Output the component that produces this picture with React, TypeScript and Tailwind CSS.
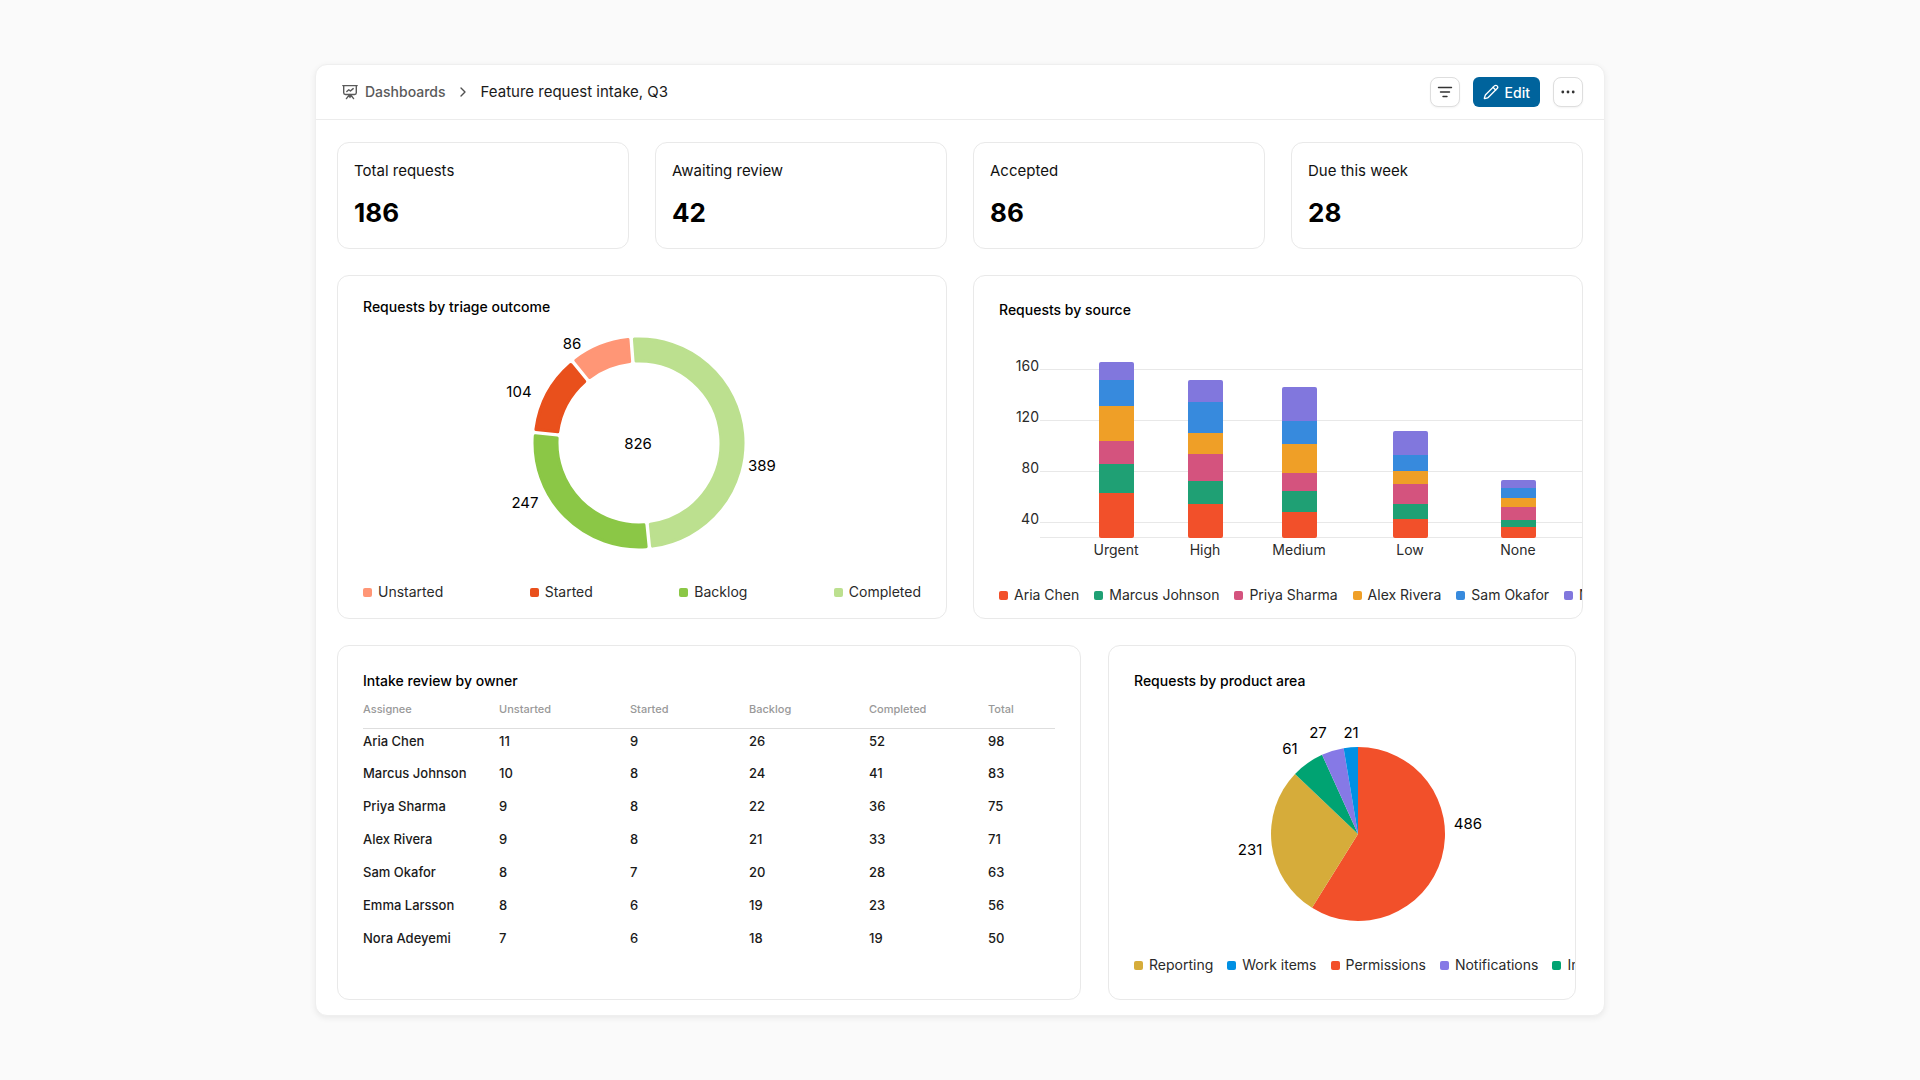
import cn from 'clsx'
import { ChevronRight, Pencil } from 'lucide-react'
import type { ReactNode } from 'react'

type Slice = { color: string; from: number; to: number }
type ChartLabel = { value: number; x: number; y: number }
type LegendItem = { name: string; color: string }

const stats = [
  { label: 'Total requests', value: 186 },
  { label: 'Awaiting review', value: 42 },
  { label: 'Accepted', value: 86 },
  { label: 'Due this week', value: 28 }
]

const triageLegend: LegendItem[] = [
  { name: 'Unstarted', color: 'bg-[#ff9676]' },
  { name: 'Started', color: 'bg-[#e9501c]' },
  { name: 'Backlog', color: 'bg-[#8bc746]' },
  { name: 'Completed', color: 'bg-[#bce08f]' }
]

// Angles are degrees, clockwise from the top
const triageSlices: Slice[] = [
  { color: '#bce08f', from: -4.3, to: 174.3 },
  { color: '#8bc746', from: 174.3, to: 275.7 },
  { color: '#e9501c', from: 275.7, to: 320.8 },
  { color: '#ff9676', from: 320.8, to: 355.7 }
]

const triageLabels: ChartLabel[] = [
  { value: 86, x: 210, y: 18 },
  { value: 104, x: 157, y: 66 },
  { value: 247, x: 163, y: 177 },
  { value: 389, x: 400, y: 140 },
  { value: 826, x: 276, y: 118 }
]

const sourceLegend: LegendItem[] = [
  { name: 'Aria Chen', color: 'bg-[#f2502a]' },
  { name: 'Marcus Johnson', color: 'bg-[#1fa074]' },
  { name: 'Priya Sharma', color: 'bg-[#d4537e]' },
  { name: 'Alex Rivera', color: 'bg-[#ef9f27]' },
  { name: 'Sam Okafor', color: 'bg-[#378add]' },
  { name: 'Nora Adeyemi', color: 'bg-[#8177dd]' }
]

const stackColors = ['#8177dd', '#378add', '#ef9f27', '#d4537e', '#1fa074', '#f2502a']

// Segment heights run from the top of the stack down
const sourceBars = [
  { name: 'Urgent', x: 142, parts: [18, 26, 35, 23, 29, 45] },
  { name: 'High', x: 231, parts: [22, 31, 21, 27, 23, 34] },
  { name: 'Medium', x: 325, parts: [34, 23, 29, 18, 21, 26] },
  { name: 'Low', x: 436, parts: [24, 16, 13, 20, 15, 19] },
  { name: 'None', x: 544, parts: [8, 10, 9, 13, 7, 11] }
]

const sourceTicks = [
  { value: 160, y: 20 },
  { value: 120, y: 71 },
  { value: 80, y: 122 },
  { value: 40, y: 173 }
]

const areaLegend: LegendItem[] = [
  { name: 'Reporting', color: 'bg-[#d6ac3a]' },
  { name: 'Work items', color: 'bg-[#0090e3]' },
  { name: 'Permissions', color: 'bg-[#f2502a]' },
  { name: 'Notifications', color: 'bg-[#8679e6]' },
  { name: 'Integrations', color: 'bg-[#00a372]' }
]

const areaSlices: Slice[] = [
  { color: '#f2502a', from: 0, to: 211.9 },
  { color: '#d6ac3a', from: 211.9, to: 313.6 },
  { color: '#00a372', from: 313.6, to: 335.6 },
  { color: '#8679e6', from: 335.6, to: 350.5 },
  { color: '#0090e3', from: 350.5, to: 360 }
]

const areaLabels: ChartLabel[] = [
  { value: 486, x: 335, y: 108 },
  { value: 231, x: 117, y: 134 },
  { value: 61, x: 157, y: 33 },
  { value: 27, x: 185, y: 17 },
  { value: 21, x: 218, y: 17 }
]

const columns = [
  { name: 'Assignee', width: 'w-[136px]' },
  { name: 'Unstarted', width: 'w-[131px]' },
  { name: 'Started', width: 'w-[119px]' },
  { name: 'Backlog', width: 'w-[120px]' },
  { name: 'Completed', width: 'w-[119px]' },
  { name: 'Total', width: 'w-auto' }
]

const owners = [
  { name: 'Aria Chen', counts: [11, 9, 26, 52, 98] },
  { name: 'Marcus Johnson', counts: [10, 8, 24, 41, 83] },
  { name: 'Priya Sharma', counts: [9, 8, 22, 36, 75] },
  { name: 'Alex Rivera', counts: [9, 8, 21, 33, 71] },
  { name: 'Sam Okafor', counts: [8, 7, 20, 28, 63] },
  { name: 'Emma Larsson', counts: [8, 6, 19, 23, 56] },
  { name: 'Nora Adeyemi', counts: [7, 6, 18, 19, 50] }
]

const point = (cx: number, cy: number, r: number, rad: number) =>
  `${(cx + r * Math.sin(rad)).toFixed(2)} ${(cy - r * Math.cos(rad)).toFixed(2)}`

const toRad = (deg: number) => (deg * Math.PI) / 180

/** Ring segment whose ends stay parallel to the gap beside them */
function ringPath(cx: number, cy: number, inner: number, outer: number, slice: Slice, inset: number) {
  const a = toRad(slice.from)
  const b = toRad(slice.to)
  const o = Math.asin(inset / outer)
  const i = Math.asin(inset / inner)
  // The inset can bring a half ring below 180 degrees on the inner side only
  const largeOuter = b - a - 2 * o > Math.PI ? 1 : 0
  const largeInner = b - a - 2 * i > Math.PI ? 1 : 0
  return [
    `M${point(cx, cy, outer, a + o)}`,
    `A${outer} ${outer} 0 ${largeOuter} 1 ${point(cx, cy, outer, b - o)}`,
    `L${point(cx, cy, inner, b - i)}`,
    `A${inner} ${inner} 0 ${largeInner} 0 ${point(cx, cy, inner, a + i)}Z`
  ].join('')
}

function piePath(cx: number, cy: number, r: number, slice: Slice) {
  const a = toRad(slice.from)
  const b = toRad(slice.to)
  const large = b - a > Math.PI ? 1 : 0
  return `M${cx} ${cy}L${point(cx, cy, r, a)}A${r} ${r} 0 ${large} 1 ${point(cx, cy, r, b)}Z`
}

function BoardIcon() {
  return (
    <svg
      className="h-4 w-4"
      viewBox="0 0 16 16"
      fill="none"
      stroke="currentColor"
      strokeWidth="1.4"
      strokeLinecap="round"
      strokeLinejoin="round"
      aria-hidden="true"
    >
      <path d="M.8 1.6h14.4M1.7 1.6v7.2c0 1 .7 1.7 1.7 1.7h9.2c1 0 1.7-.7 1.7-1.7V1.6" />
      <path d="M4.8 7.6l2-1.8 1.6 1.2 2.8-2.4M8 10.5v3M7.4 10.8l-3 3.8M8.6 10.8l3 3.8" />
    </svg>
  )
}

function Labels(props: { items: ChartLabel[] }) {
  return (
    <g className="fill-black text-[15px]" textAnchor="middle" dominantBaseline="central">
      {props.items.map(item => (
        <text key={item.value} x={item.x} y={item.y}>
          {item.value}
        </text>
      ))}
    </g>
  )
}

function Legend(props: { items: LegendItem[]; className?: string }) {
  return (
    <ul className={cn('flex text-[14px] leading-5 whitespace-nowrap text-[#2a2a2a]', props.className)}>
      {props.items.map(item => (
        <li key={item.name} className="flex items-center gap-1.5">
          <span className={cn('h-[9px] w-[9px] shrink-0 rounded-xs', item.color)}></span>
          {item.name}
        </li>
      ))}
    </ul>
  )
}

function Card(props: { title: string; className?: string; children: ReactNode }) {
  return (
    <section
      className={cn(
        'flex min-w-0 flex-col overflow-hidden rounded-xl border border-[#e9e9e9] bg-white',
        props.className
      )}
    >
      <h2 className="px-[25px] text-[14px] leading-5 font-medium text-black">{props.title}</h2>
      {props.children}
    </section>
  )
}

function TriageCard() {
  return (
    <Card title="Requests by triage outcome" className="pt-[21px] pb-4">
      <svg className="mx-6 mt-2" viewBox="0 0 560 235" role="img" aria-label="Triage outcome">
        {triageSlices.map(slice => (
          <path
            key={slice.color}
            d={ringPath(277, 118, 82, 104, slice, 3.2)}
            fill={slice.color}
            stroke={slice.color}
            strokeWidth="3"
            strokeLinejoin="round"
          />
        ))}
        <Labels items={triageLabels} />
      </svg>
      <Legend items={triageLegend} className="mt-[22px] justify-between px-[25px]" />
    </Card>
  )
}

function SourceBar(props: { bar: (typeof sourceBars)[number] }) {
  const { name, x, parts } = props.bar
  const total = parts.reduce((sum, h) => sum + h, 0)
  const clipId = `bar-${name}`
  let y = 188 - total
  return (
    <g>
      <clipPath id={clipId}>
        <rect x={x - 17} y={y} width="35" height={total} rx="2" />
      </clipPath>
      <g clipPath={`url(#${clipId})`}>
        {parts.map((h, i) => {
          const top = y
          y += h
          return <rect key={i} x={x - 17} y={top} width="35" height={h} fill={stackColors[i]} />
        })}
      </g>
      <text x={x} y="205" textAnchor="middle">
        {name}
      </text>
    </g>
  )
}

function SourceCard() {
  return (
    <Card title="Requests by source" className="pt-6">
      <svg
        className="mt-[30px] fill-[#2a2a2a] text-[14px]"
        viewBox="0 0 608 210"
        role="img"
        aria-label="Requests by source"
      >
        {sourceTicks.map(tick => (
          <g key={tick.value}>
            <rect x="66" y={tick.y - 1} width="542" height="1" fill="#e8e8e8" />
            <text x="65" y={tick.y + 1} textAnchor="end">
              {tick.value}
            </text>
          </g>
        ))}
        <rect x="66" y="187" width="542" height="1" fill="#e8e8e8" />
        {sourceBars.map(bar => (
          <SourceBar key={bar.name} bar={bar} />
        ))}
      </svg>
      <Legend items={sourceLegend} className="mt-[25px] gap-[15px] pl-[25px]" />
    </Card>
  )
}

function OwnersCard() {
  return (
    <Card title="Intake review by owner" className="pt-[25px] pb-10">
      <div className="mt-2 px-[25px]">
        <table className="w-full table-fixed text-left font-medium">
          <thead>
            <tr className="border-b border-[#dedede]">
              {columns.map(col => (
                <th
                  key={col.name}
                  scope="col"
                  className={cn('h-[29px] p-0 align-top text-[11px] leading-5 font-medium text-[#999]', col.width)}
                >
                  {col.name}
                </th>
              ))}
            </tr>
          </thead>
          <tbody className="text-[13px] leading-5 text-[#1a1a1a]">
            {owners.map(owner => (
              <tr key={owner.name}>
                <td className="h-[33px] pt-0.5 align-top">{owner.name}</td>
                {owner.counts.map((count, i) => (
                  <td key={i} className="h-[33px] pt-0.5 align-top">
                    {count}
                  </td>
                ))}
              </tr>
            ))}
          </tbody>
        </table>
      </div>
    </Card>
  )
}

function AreaCard() {
  return (
    <Card title="Requests by product area" className="pt-[25px]">
      <svg className="mx-6 mt-6" viewBox="0 0 418 220" role="img" aria-label="Requests by product area">
        {areaSlices.map(slice => (
          <path key={slice.color} d={piePath(225, 119, 87, slice)} fill={slice.color} />
        ))}
        <Labels items={areaLabels} />
      </svg>
      <Legend items={areaLegend} className="mt-5 gap-[14px] pl-[25px]" />
    </Card>
  )
}

export default function App() {
  return (
    <div className="min-h-screen bg-[#fafafa] py-16 font-['Inter',sans-serif] text-[#111] [font-optical-sizing:none]">
      <main className="mx-auto w-full max-w-[1290px] rounded-xl border border-[#efefef] bg-white shadow-[0_2px_6px_rgba(0,0,0,0.07)]">
        <header className="flex h-[55px] items-center justify-between border-b border-[#ececec] px-[21px]">
          <nav aria-label="Breadcrumb" className="flex items-center pl-[5px]">
            <a href="#" className="flex items-center gap-[7px] text-[14px] leading-5 font-medium text-[#5a5a5a]">
              <BoardIcon />
              Dashboards
            </a>
            <ChevronRight className="mr-2.5 ml-[9px] h-4 w-4 text-[#4f4f4f]" strokeWidth={2} />
            <h1 className="text-[15px] leading-5 text-[#1a1a1a]">Feature request intake, Q3</h1>
          </nav>
          <div className="flex items-center gap-[13px]">
            <button
              type="button"
              aria-label="Filter"
              className="flex h-[30px] w-[30px] items-center justify-center rounded-lg border border-[#dedede] bg-white shadow-xs"
            >
              <svg
                className="h-4 w-4 shrink-0"
                viewBox="0 0 16 16"
                stroke="#333"
                strokeWidth="1.4"
                strokeLinecap="round"
                aria-hidden="true"
              >
                <path d="M1.5 3.5h13M3.5 8h9M6 12.5h4" />
              </svg>
            </button>
            <button
              type="button"
              className="flex h-[30px] items-center gap-1.5 rounded-md bg-[#00639c] px-2.5 text-[14px] font-medium text-white"
            >
              <Pencil className="h-4 w-4" strokeWidth={2} />
              Edit
            </button>
            <button
              type="button"
              aria-label="More"
              className="flex h-[30px] w-[30px] items-center justify-center rounded-lg border border-[#dedede] bg-white shadow-xs"
            >
              <svg className="h-4 w-4 shrink-0" viewBox="0 0 16 16" fill="#333" aria-hidden="true">
                <circle cx="2.8" cy="8" r="1.4" />
                <circle cx="8" cy="8" r="1.4" />
                <circle cx="13.2" cy="8" r="1.4" />
              </svg>
            </button>
          </div>
        </header>

        <div className="flex flex-col gap-[26px] px-[21px] pt-[22px] pb-[15px]">
          <div className="grid grid-cols-4 gap-[26px]">
            {stats.map(stat => (
              <section key={stat.label} className="rounded-xl border border-[#e9e9e9] bg-white px-4 pt-[18px] pb-[19px]">
                <h2 className="text-[15px] leading-5">{stat.label}</h2>
                <p className="mt-4 text-[26px] leading-8 font-bold text-black">{stat.value}</p>
              </section>
            ))}
          </div>

          <div className="grid grid-cols-2 gap-[26px]">
            <TriageCard />
            <SourceCard />
          </div>

          <div className="grid grid-cols-[744fr_468fr] gap-[27px] pr-[7px]">
            <OwnersCard />
            <AreaCard />
          </div>
        </div>
      </main>
    </div>
  )
}
